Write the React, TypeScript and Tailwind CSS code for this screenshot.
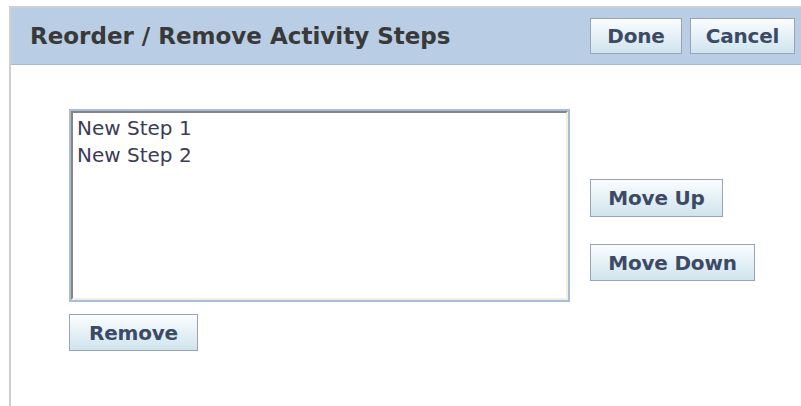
import React from "react";

const font = { fontFamily: '"DejaVu Sans", Verdana, sans-serif' };

function Btn({ children, className = "" }: { children: React.ReactNode; className?: string }) {
  return (
    <button
      className={`flex items-center justify-center border border-[#9aa3b5] bg-gradient-to-b from-[#fbfdfe] to-[#cfe4ee] font-bold text-[20px] text-[#3d4a66] tracking-[-0.2px] ${className}`}
      style={font}
    >
      {children}
    </button>
  );
}

export default function App() {
  const steps = ["New Step 1", "New Step 2"];
  return (
    <div className="w-[801px] h-[406px] bg-white pt-[6px] pl-[9px]" style={font}>
      <div className="h-full border-l-2 border-t-2 border-[#cfcfcf] flex flex-col">
        <div className="h-[57px] bg-[#b9cde4] border-b border-[#a5bbd6] flex items-center pl-[19px] pr-[6px]">
          <h1 className="text-[23px] font-bold text-[#393939] flex-1">
            Reorder / Remove Activity Steps
          </h1>
          <div className="flex gap-[8px]">
            <Btn className="w-[92px] h-[36px]">Done</Btn>
            <Btn className="w-[105px] h-[36px]">Cancel</Btn>
          </div>
        </div>
        <div className="flex pl-[58px] pt-[44px]">
          <div className="flex flex-col">
            <div className="w-[501px] h-[193px] border-2 border-[#a9bdd8] bg-white">
              <div className="h-full border-t-2 border-l-2 border-t-[#858585] border-l-[#858585] border-b-2 border-r-2 border-b-[#f0efe4] border-r-[#f0efe4] pl-[4px] pt-[2px]">
                {steps.map((s) => (
                  <div key={s} className="text-[20px] leading-[27px] text-[#3c3c55]">
                    {s}
                  </div>
                ))}
              </div>
            </div>
            <Btn className="w-[129px] h-[37px] mt-[12px]">Remove</Btn>
          </div>
          <div className="flex flex-col pl-[20px] pt-[70px] gap-[27px] items-start">
            <Btn className="w-[133px] h-[38px]">Move Up</Btn>
            <Btn className="w-[165px] h-[37px]">Move Down</Btn>
          </div>
        </div>
      </div>
    </div>
  );
}
